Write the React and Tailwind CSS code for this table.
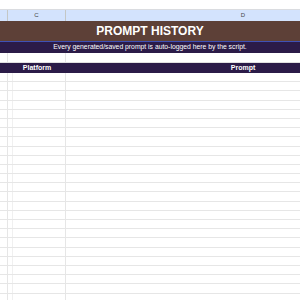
import React from 'react';

const rows = Array.from({ length: 25 });

function GridRow() {
    return (
        <div className="flex h-[9.2px] border-b border-[#e6e6e6]">
            <div className="w-[8px] shrink-0 border-r border-[#e6e6e6]" />
            <div className="w-[5px] shrink-0 border-r border-[#f0f0f0]" />
            <div className="w-[53px] shrink-0 border-r border-[#e6e6e6]" />
            <div className="flex-1" />
        </div>
    );
}

export default function App() {
    return (
        <div className="w-[300px] h-[300px] overflow-hidden bg-white font-['Liberation_Sans',Arial,sans-serif]">
            {/* top strip above column letters */}
            <div className="h-[10px] border-b border-[#dadce0] bg-white" />

            {/* column letters */}
            <div className="flex h-[11px] bg-[#d3e3fd] text-[6px] text-[#444746] leading-[11px] overflow-hidden">
                <div className="w-[8px] shrink-0 border-r border-[#c4c7c5]" />
                <div className="w-[58px] shrink-0 border-r border-[#c4c7c5] text-center">C</div>
                <div className="w-[354px] shrink-0 text-center">D</div>
            </div>

            {/* title */}
            <div className="h-[20px] bg-[#5d4037] flex items-center justify-center text-white font-bold text-[12px]">
                PROMPT HISTORY
            </div>
            <div className="h-[1px] bg-[#3f51b5]" />

            {/* subtitle */}
            <div className="h-[11px] bg-[#2b1b48] flex items-center justify-center text-white text-[6.8px] whitespace-nowrap">
                Every generated/saved prompt is auto-logged here by the script.
            </div>

            {/* empty row */}
            <div className="flex h-[10px] border-b border-[#e0e0e0]">
                <div className="w-[8px] shrink-0 border-r border-[#e6e6e6]" />
                <div className="w-[58px] shrink-0 border-r border-[#e6e6e6]" />
                <div className="flex-1" />
            </div>

            {/* table header */}
            <div className="flex h-[10px] bg-[#2b1b48] text-white font-bold text-[7px] leading-[10px] overflow-hidden">
                <div className="w-[8px] shrink-0" />
                <div className="w-[58px] shrink-0 text-center">Platform</div>
                <div className="w-[354px] shrink-0 text-center">Prompt</div>
            </div>

            {/* empty data rows */}
            {rows.map((_, i) => (
                <GridRow key={i} />
            ))}
        </div>
    );
}
